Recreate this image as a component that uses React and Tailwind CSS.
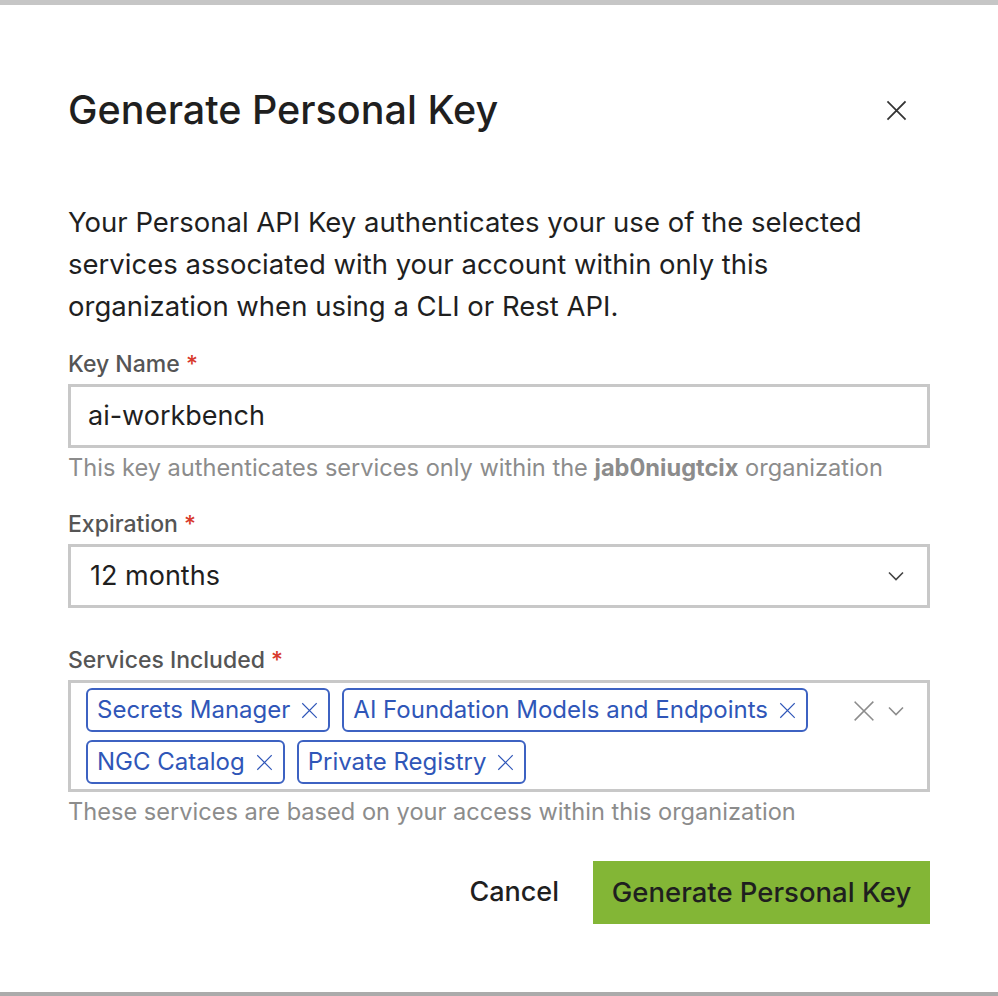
import React from "react";

const XIcon = ({ className, sw = 1.6 }) => (
  <svg viewBox="0 0 20 20" className={className} fill="none" stroke="currentColor" strokeWidth={sw} strokeLinecap="square">
    <path d="M2 2 L18 18 M18 2 L2 18" />
  </svg>
);

const Chevron = ({ className }) => (
  <svg viewBox="0 0 16 10" className={className} fill="none" stroke="currentColor" strokeWidth="1.6">
    <path d="M1 1.5 L8 8.5 L15 1.5" />
  </svg>
);

const Tag = ({ children }) => (
  <div className="flex items-center h-[44px] pl-[9px] pr-[10px] gap-[11px] border-2 border-[#3d62c2] rounded-[6px] text-[#2f56b8] text-[24px]">
    <span>{children}</span>
    <XIcon className="w-[17px] h-[17px]" sw={1.4} />
  </div>
);

const Label = ({ children }) => (
  <div className="text-[23px] leading-[28px] font-medium text-[#555]">
    {children} <span className="text-[#d8392b]">*</span>
  </div>
);

export default function App() {
  return (
    <div
      className="w-[998px] h-[996px] bg-white border-t-[5px] border-t-[#c6c6c6] border-b-4 border-b-[#ababab] flex flex-col px-[68px]"
      style={{ fontFamily: 'Inter, "Noto Sans", sans-serif' }}
    >
      <div className="flex items-center justify-between mt-[83px] h-[44px]">
        <h1 className="text-[39.5px] leading-[44px] font-medium text-[#1f1f1f]">Generate Personal Key</h1>
        <XIcon className="w-[21px] h-[21px] text-[#333] mr-[23px]" sw={1.7} />
      </div>

      <p className="mt-[69px] text-[27.5px] leading-[42px] text-[#1f1f1f] w-[830px]">
        Your Personal API Key authenticates your use of the selected services associated with your account within only this organization when using a CLI or Rest API.
      </p>

      <div className="mt-[23px]">
        <Label>Key Name</Label>
      </div>
      <div className="mt-[6px] h-[64px] border-[3px] border-[#c8c8c8] flex items-center pl-[17px] text-[27px] text-[#1f1f1f]">
        ai-workbench
      </div>
      <div className="mt-[6px] text-[23.6px] leading-[28px] text-[#8c8c8c]">
        This key authenticates services only within the <span className="font-bold">jab0niugtcix</span> organization
      </div>

      <div className="mt-[28px]">
        <Label>Expiration</Label>
      </div>
      <div className="mt-[6px] h-[64px] border-[3px] border-[#c8c8c8] flex items-center justify-between pl-[19px] pr-[23px] text-[27px] text-[#1f1f1f]">
        <span>12 months</span>
        <Chevron className="w-[16px] h-[10px] text-[#444]" />
      </div>

      <div className="mt-[38px]">
        <Label>Services Included</Label>
      </div>
      <div className="mt-[6px] h-[112px] border-[3px] border-[#c8c8c8] flex items-start pl-[15px] pr-[23px] pt-[5px]">
        <div className="flex flex-wrap gap-x-[12px] gap-y-[8px] w-[740px]">
          <Tag>Secrets Manager</Tag>
          <Tag>AI Foundation Models and Endpoints</Tag>
          <Tag>NGC Catalog</Tag>
          <Tag>Private Registry</Tag>
        </div>
        <div className="ml-auto flex items-center gap-[13px] mt-[12px]">
          <XIcon className="w-[22px] h-[22px] text-[#8c8c8c]" sw={1.4} />
          <Chevron className="w-[16px] h-[10px] text-[#8c8c8c]" />
        </div>
      </div>
      <div className="mt-[6px] text-[23.6px] leading-[28px] text-[#8c8c8c]">
        These services are based on your access within this organization
      </div>

      <div className="mt-[35px] flex justify-end items-center">
        <button className="text-[27px] font-medium text-[#1f1f1f] mr-[34px]">Cancel</button>
        <button className="h-[63px] w-[337px] bg-[#83b636] text-[27.5px] font-medium text-[#1f1f1f]">
          Generate Personal Key
        </button>
      </div>
    </div>
  );
}
